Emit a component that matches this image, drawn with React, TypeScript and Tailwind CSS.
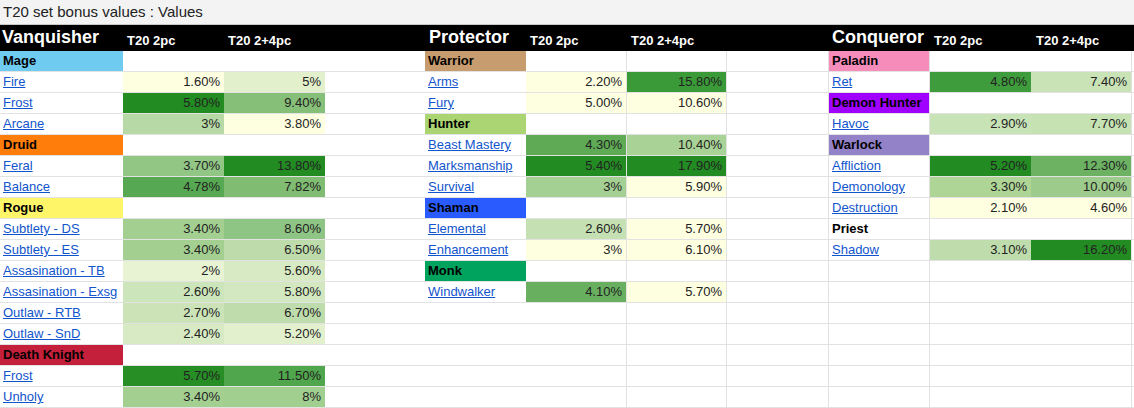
import React from "react";

type Row =
  | { kind: "class"; name: string; bg: string }
  | { kind: "spec"; name: string; a: string; aBg: string; b: string; bBg: string }
  | { kind: "empty" };

const cls = (name: string, bg: string): Row => ({ kind: "class", name, bg });
const spec = (name: string, a: string, aBg: string, b: string, bBg: string): Row => ({
  kind: "spec",
  name,
  a,
  aBg,
  b,
  bBg,
});

const VANQUISHER: Row[] = [
  cls("Mage", "bg-[#6fccf0]"),
  spec("Fire", "1.60%", "bg-[#fefee0]", "5%", "bg-[#e3f0cc]"),
  spec("Frost", "5.80%", "bg-[#228b22]", "9.40%", "bg-[#86bf78]"),
  spec("Arcane", "3%", "bg-[#b7d9a5]", "3.80%", "bg-[#fefee0]"),
  cls("Druid", "bg-[#ff7d0a]"),
  spec("Feral", "3.70%", "bg-[#92c685]", "13.80%", "bg-[#228b22]"),
  spec("Balance", "4.78%", "bg-[#57a852]", "7.82%", "bg-[#80bc72]"),
  cls("Rogue", "bg-[#fff569]"),
  spec("Subtlety - DS", "3.40%", "bg-[#a3cf91]", "8.60%", "bg-[#8fc584]"),
  spec("Subtlety - ES", "3.40%", "bg-[#a3cf91]", "6.50%", "bg-[#bedcab]"),
  spec("Assasination - TB", "2%", "bg-[#e8f3d3]", "5.60%", "bg-[#d8eac3]"),
  spec("Assasination - Exsg", "2.60%", "bg-[#cde5ba]", "5.80%", "bg-[#d3e8c0]"),
  spec("Outlaw - RTB", "2.70%", "bg-[#cbe3b7]", "6.70%", "bg-[#bfdcac]"),
  spec("Outlaw - SnD", "2.40%", "bg-[#d7eac3]", "5.20%", "bg-[#e2f0ce]"),
  cls("Death Knight", "bg-[#c41f3b]"),
  spec("Frost", "5.70%", "bg-[#268e25]", "11.50%", "bg-[#50a64c]"),
  spec("Unholy", "3.40%", "bg-[#a3cf91]", "8%", "bg-[#a0cf8f]"),
];

const PROTECTOR: Row[] = [
  cls("Warrior", "bg-[#c79c6e]"),
  spec("Arms", "2.20%", "bg-[#fefee0]", "15.80%", "bg-[#3a9a37]"),
  spec("Fury", "5.00%", "bg-[#fefee0]", "10.60%", "bg-[#fefee0]"),
  cls("Hunter", "bg-[#abd473]"),
  spec("Beast Mastery", "4.30%", "bg-[#5faa55]", "10.40%", "bg-[#a9d296]"),
  spec("Marksmanship", "5.40%", "bg-[#228b22]", "17.90%", "bg-[#228b22]"),
  spec("Survival", "3%", "bg-[#a5d093]", "5.90%", "bg-[#fefee0]"),
  cls("Shaman", "bg-[#2a5bfe]"),
  spec("Elemental", "2.60%", "bg-[#c5e1b3]", "5.70%", "bg-[#fefee0]"),
  spec("Enhancement", "3%", "bg-[#fefee0]", "6.10%", "bg-[#fefee0]"),
  cls("Monk", "bg-[#00a35e]"),
  spec("Windwalker", "4.10%", "bg-[#68b060]", "5.70%", "bg-[#fefee0]"),
];

const CONQUEROR: Row[] = [
  cls("Paladin", "bg-[#f58cba]"),
  spec("Ret", "4.80%", "bg-[#3f9c3c]", "7.40%", "bg-[#c9e3b6]"),
  cls("Demon Hunter", "bg-[#a000ff]"),
  spec("Havoc", "2.90%", "bg-[#c8e3b6]", "7.70%", "bg-[#c6e2b3]"),
  cls("Warlock", "bg-[#9482c9]"),
  spec("Affliction", "5.20%", "bg-[#228b22]", "12.30%", "bg-[#6cb262]"),
  spec("Demonology", "3.30%", "bg-[#aed596]", "10.00%", "bg-[#9ccb8b]"),
  spec("Destruction", "2.10%", "bg-[#fefee0]", "4.60%", "bg-[#fefee0]"),
  cls("Priest", "bg-white"),
  spec("Shadow", "3.10%", "bg-[#bfddac]", "16.20%", "bg-[#228b22]"),
];

const ROWS = 17;
const EMPTY: Row = { kind: "empty" };

// column widths + which ones show a vertical gridline
interface Cols {
  name: string;
  a: string;
  b: string;
}

const cell = "h-[21px] shrink-0 border-b border-[#e2e2e2] overflow-hidden whitespace-nowrap leading-[20px]";

function SectionCells({ row, cols }: { row: Row; cols: Cols }) {
  if (row.kind === "class") {
    return (
      <>
        <div className={`${cell} ${cols.name} ${row.bg} pl-[3px] font-bold text-black`}>{row.name}</div>
        <div className={`${cell} ${cols.a}`} />
        <div className={`${cell} ${cols.b}`} />
      </>
    );
  }
  if (row.kind === "spec") {
    return (
      <>
        <div className={`${cell} ${cols.name} pl-[3px]`}>
          <a href="#" className="text-[#1155cc] underline">
            {row.name}
          </a>
        </div>
        <div className={`${cell} ${cols.a} ${row.aBg} pr-[4px] text-right text-[#222]`}>{row.a}</div>
        <div className={`${cell} ${cols.b} ${row.bBg} pr-[4px] text-right text-[#222]`}>{row.b}</div>
      </>
    );
  }
  return (
    <>
      <div className={`${cell} ${cols.name}`} />
      <div className={`${cell} ${cols.a}`} />
      <div className={`${cell} ${cols.b}`} />
    </>
  );
}

const VANQ_COLS: Cols = { name: "w-[123px]", a: "w-[101px]", b: "w-[101px]" };
const PROT_COLS: Cols = { name: "w-[101px]", a: "w-[101px] border-r", b: "w-[100px] border-r" };
const CONQ_COLS: Cols = { name: "w-[101px] border-r", a: "w-[101px]", b: "w-[101px] border-r" };

function HeaderGroup({ title, nameW, titlePad }: { title: string; nameW: string; titlePad: string }) {
  return (
    <>
      <div className={`${nameW} ${titlePad} shrink-0 flex items-end pb-[3px] text-[18px] leading-[21px] font-bold whitespace-nowrap`}>
        {title}
      </div>
      <div className="w-[101px] shrink-0 flex items-end pb-[3px] pl-[4px] text-[13px] leading-[15px] font-bold whitespace-nowrap">
        T20 2pc
      </div>
      <div className="w-[101px] shrink-0 flex items-end pb-[3px] pl-[4px] text-[13px] leading-[15px] font-bold whitespace-nowrap">
        T20 2+4pc
      </div>
    </>
  );
}

export default function App() {
  return (
    <div className="w-[1134px] h-[408px] overflow-hidden bg-white font-['Liberation_Sans',Arial,sans-serif] text-[13px]">
      {/* sheet title */}
      <div className="h-[25px] border-b border-[#c8c8c8] bg-[#f3f3f3] pl-[3px] text-[15px] leading-[23px] text-[#222]">
        T20 set bonus values : Values
      </div>

      {/* black header row */}
      <div className="flex h-[26px] bg-black text-white">
        <HeaderGroup title="Vanquisher" nameW="w-[123px]" titlePad="pl-[2px]" />
        <div className="w-[100px] shrink-0" />
        <HeaderGroup title="Protector" nameW="w-[101px]" titlePad="pl-[4px]" />
        <div className="w-[102px] shrink-0" />
        <div className="w-[101px] shrink-0 flex items-end pb-[3px] pl-[2px] text-[18px] leading-[21px] font-bold whitespace-nowrap">
          Conqueror
        </div>
        <div className="w-[101px] shrink-0 flex items-end pb-[3px] pl-[3px] text-[13px] leading-[15px] font-bold whitespace-nowrap">
          T20 2pc
        </div>
        <div className="w-[101px] shrink-0 flex items-end pb-[3px] pl-[4px] text-[13px] leading-[15px] font-bold whitespace-nowrap">
          T20 2+4pc
        </div>
      </div>

      {/* body */}
      <div className="flex flex-col">
        {Array.from({ length: ROWS }, (_, i) => (
          <div key={i} className="flex">
            <SectionCells row={VANQUISHER[i] ?? EMPTY} cols={VANQ_COLS} />
            <div className={`${cell} w-[100px]`} />
            <SectionCells row={PROTECTOR[i] ?? EMPTY} cols={PROT_COLS} />
            <div className={`${cell} w-[102px] border-r`} />
            <SectionCells row={CONQUEROR[i] ?? EMPTY} cols={CONQ_COLS} />
            <div className={`${cell} flex-1`} />
          </div>
        ))}
      </div>
    </div>
  );
}
